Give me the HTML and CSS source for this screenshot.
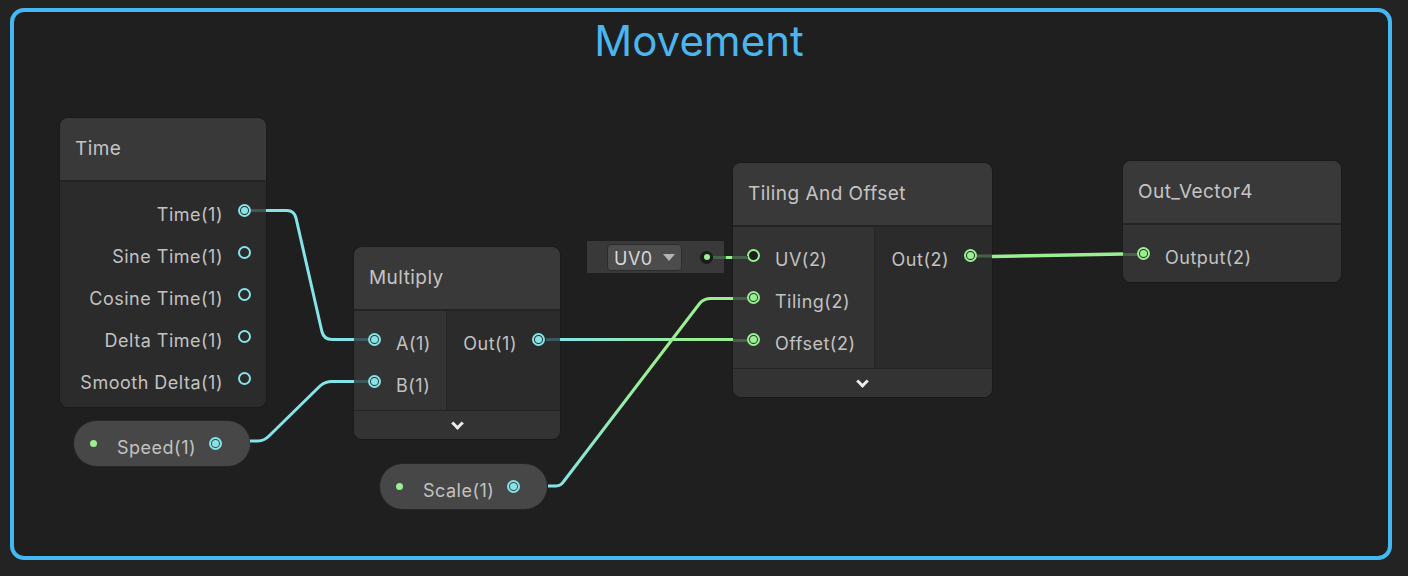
FILE: index.html
```html
<!DOCTYPE html>
<html>
<head>
<meta charset="utf-8">
<link rel="stylesheet" href="styles.css">
</head>
<body>
<div class="canvas">
  <div class="group">
    <div class="group-title">Movement</div>
  </div>

  <div class="node node-time">
    <div class="node-head">Time</div>
    <div class="node-body">
      <div class="col outputs full">
        <div class="row out"><span class="lbl">Time(1)</span><span class="port cyan on"></span></div>
        <div class="row out"><span class="lbl">Sine Time(1)</span><span class="port cyan"></span></div>
        <div class="row out"><span class="lbl">Cosine Time(1)</span><span class="port cyan"></span></div>
        <div class="row out"><span class="lbl">Delta Time(1)</span><span class="port cyan"></span></div>
        <div class="row out"><span class="lbl">Smooth Delta(1)</span><span class="port cyan"></span></div>
      </div>
    </div>
  </div>

  <div class="node node-mul">
    <div class="node-head">Multiply</div>
    <div class="node-body">
      <div class="col inputs w-mul">
        <div class="row in"><span class="port cyan on"></span><span class="lbl">A(1)</span></div>
        <div class="row in"><span class="port cyan on"></span><span class="lbl">B(1)</span></div>
      </div>
      <div class="col outputs">
        <div class="row out"><span class="lbl">Out(1)</span><span class="port cyan on"></span></div>
      </div>
    </div>
    <div class="node-foot"><span class="chev"></span></div>
  </div>

  <div class="node node-tile">
    <div class="node-head">Tiling And Offset</div>
    <div class="node-body">
      <div class="col inputs w-tile">
        <div class="row in"><span class="port green hollow"></span><span class="lbl">UV(2)</span></div>
        <div class="row in"><span class="port green on"></span><span class="lbl">Tiling(2)</span></div>
        <div class="row in"><span class="port green on"></span><span class="lbl">Offset(2)</span></div>
      </div>
      <div class="col outputs">
        <div class="row out"><span class="lbl">Out(2)</span><span class="port green on"></span></div>
      </div>
    </div>
    <div class="node-foot"><span class="chev"></span></div>
  </div>

  <div class="node node-out">
    <div class="node-head">Out_Vector4</div>
    <div class="node-body">
      <div class="col inputs full">
        <div class="row in"><span class="port green on"></span><span class="lbl">Output(2)</span></div>
      </div>
    </div>
  </div>

  <div class="uv-field">
    <div class="dropdown"><span class="dd-text">UV0</span><span class="dd-arrow"></span></div>
    <span class="uv-dot"></span>
  </div>

  <div class="pill pill-speed">
    <span class="pill-dot"></span><span class="lbl">Speed(1)</span><span class="port cyan on"></span>
  </div>
  <div class="pill pill-scale">
    <span class="pill-dot"></span><span class="lbl">Scale(1)</span><span class="port cyan on"></span>
  </div>

  <svg class="wires" width="1408" height="576" viewBox="0 0 1408 576">
    <defs>
      <linearGradient id="gOff" gradientUnits="userSpaceOnUse" x1="562" y1="0" x2="700" y2="0">
        <stop offset="0" stop-color="#84e4e7"/>
        <stop offset="1" stop-color="#9aef92"/>
      </linearGradient>
      <linearGradient id="gTile" gradientUnits="userSpaceOnUse" x1="550" y1="486" x2="705" y2="298">
        <stop offset="0" stop-color="#84e4e7"/>
        <stop offset="0.6" stop-color="#9aef92"/>
        <stop offset="1" stop-color="#9aef92"/>
      </linearGradient>
    </defs>
    <g fill="none" stroke-width="3" stroke-linecap="butt" stroke-linejoin="round">
      <path d="M251 210.5 H266" stroke="#3c5a5b"/>
      <path d="M354 339.5 H368" stroke="#3c5a5b"/>
      <path d="M354 381.5 H368" stroke="#3c5a5b"/>
      <path d="M546 339.5 H560" stroke="#3c5a5b"/>
      <path d="M733 340.5 H747" stroke="#46604a"/>
      <path d="M733 298.5 H747" stroke="#46604a"/>
      <path d="M977 256 H992" stroke="#46604a"/>
      <path d="M1123 254.5 H1137" stroke="#46604a"/>
      <path d="M713 257.5 H726 M732 257.5 H748" stroke="#46604a"/>
      <path d="M726 257.5 H732" stroke="#9aef92"/>
      <path d="M266 210.5 H287 Q294 210.5 296 218 L322 332 Q324 339.5 332 339.5 H354" stroke="#84e4e7"/>
      <path d="M250 441 H258 Q264 441 269 436 L320 386 Q325 381.5 332 381.5 H354" stroke="#84e4e7"/>
      <path d="M560 339.5 H733" stroke="url(#gOff)"/>
      <path d="M548 486 H556 Q561 486 564 481 L700 303 Q704 298.5 711 298.5 H733" stroke="url(#gTile)"/>
      <path d="M992 256.5 L1123 254" stroke="#9aef92" stroke-width="3.5"/>
    </g>
  </svg>
</div>
</body>
</html>
```
FILE: styles.css
```css
* { box-sizing: border-box; }
html, body { margin: 0; padding: 0; }
body {
  background: #232323;
  font-family: Inter, "Noto Sans", "Liberation Sans", sans-serif;
  color: #c2c2c2;
}
.canvas {
  position: relative;
  width: 1408px;
  height: 576px;
  overflow: hidden;
}
.group {
  position: absolute;
  left: 10px;
  top: 8px;
  width: 1382px;
  height: 552px;
  border: 4px solid #44b8f2;
  border-radius: 14px;
  background: #1f1f1f;
}
.group-title {
  text-align: center;
  color: #4ab5ee;
  font-size: 42px;
  line-height: 50px;
  padding-top: 4px;
  padding-right: 4px;
}

.node {
  position: absolute;
  display: flex;
  flex-direction: column;
  border-radius: 8px;
  overflow: hidden;
  background: #2a2a2a;
  box-shadow: 0 0 0 1px #1a1a1a;
}
.node-time { left: 60px; top: 118px; width: 206px; }
.node-mul { left: 354px; top: 247px; width: 206px; }
.node-tile { left: 733px; top: 163px; width: 259px; }
.node-out { left: 1123px; top: 161px; width: 218px; }

.node-head {
  height: 64px;
  background: #393939;
  border-bottom: 2px solid #242424;
  display: flex;
  align-items: center;
  padding-left: 15px;
  padding-bottom: 1px;
  font-size: 19px;
  letter-spacing: 0.45px;
  color: #c4c4c4;
}
.node-body {
  display: flex;
}
.col {
  padding: 7px 0 8px;
  display: flex;
  flex-direction: column;
}
.col.full { flex: 1; }
.outputs { flex: 1; background: #2b2b2b; }
.inputs { background: #333333; border-right: 1px solid #262626; }
.inputs.full { border-right: 0; }
.w-mul { width: 93px; }
.w-tile { width: 142px; }

.row {
  height: 42px;
  display: flex;
  align-items: center;
  font-size: 18px;
  letter-spacing: 0.5px;
  white-space: nowrap;
}
.row.out { justify-content: flex-end; padding-right: 15px; gap: 15px; }
.row.in { padding-left: 14px; gap: 15px; }
.lbl { margin-top: 8px; color: #c2c2c2; }

.port {
  width: 13px;
  height: 13px;
  border-radius: 50%;
  border: 2px solid currentColor;
  display: flex;
  align-items: center;
  justify-content: center;
  flex: none;
}
.port.cyan { color: #84e4e7; }
.port.green { color: #9aef92; }
.port.on::after {
  content: "";
  width: 7px;
  height: 7px;
  border-radius: 50%;
  background: currentColor;
}
.port.hollow { background: #1e1e1e; }

.node-foot {
  height: 29px;
  background: #333333;
  border-top: 1px solid #242424;
  display: flex;
  align-items: center;
  justify-content: center;
}
.chev {
  width: 9px;
  height: 9px;
  border-right: 3px solid #ececec;
  border-bottom: 3px solid #ececec;
  transform: rotate(45deg);
  margin-top: -4px;
}

.uv-field {
  position: absolute;
  left: 587px;
  top: 241px;
  width: 137px;
  height: 32px;
  background: #393939;
  display: flex;
  align-items: center;
  padding-left: 20px;
}
.dropdown {
  width: 75px;
  height: 27px;
  background: #4c4c4c;
  border: 1px solid #2c2c2c;
  border-radius: 4px;
  display: flex;
  align-items: center;
  padding-left: 6px;
  gap: 10px;
}
.dd-text { font-size: 18px; letter-spacing: 0.5px; color: #d8d8d8; margin-top: 2px; }
.dd-arrow {
  width: 0;
  height: 0;
  border-left: 6px solid transparent;
  border-right: 6px solid transparent;
  border-top: 7px solid #b4b4b4;
}
.uv-dot {
  margin-left: 18px;
  width: 13px;
  height: 13px;
  border-radius: 50%;
  background: #1b1b1b;
  display: flex;
  align-items: center;
  justify-content: center;
}
.uv-dot::after {
  content: "";
  width: 6px;
  height: 6px;
  border-radius: 50%;
  background: #9aef92;
}

.pill {
  position: absolute;
  height: 45px;
  border-radius: 23px;
  background: #474747;
  box-shadow: 0 0 0 1px #262626;
  display: flex;
  align-items: center;
  font-size: 18px;
  letter-spacing: 0.5px;
  white-space: nowrap;
}
.pill-speed { left: 74px; top: 421px; width: 176px; padding-left: 16px; }
.pill-scale { left: 380px; top: 464px; width: 167px; padding-left: 16px; }
.pill-dot {
  width: 7px;
  height: 7px;
  border-radius: 50%;
  background: #9aef92;
  margin-right: 20px;
}
.pill .lbl { margin-right: 13px; }

.wires {
  position: absolute;
  left: 0;
  top: 0;
  pointer-events: none;
}
```
